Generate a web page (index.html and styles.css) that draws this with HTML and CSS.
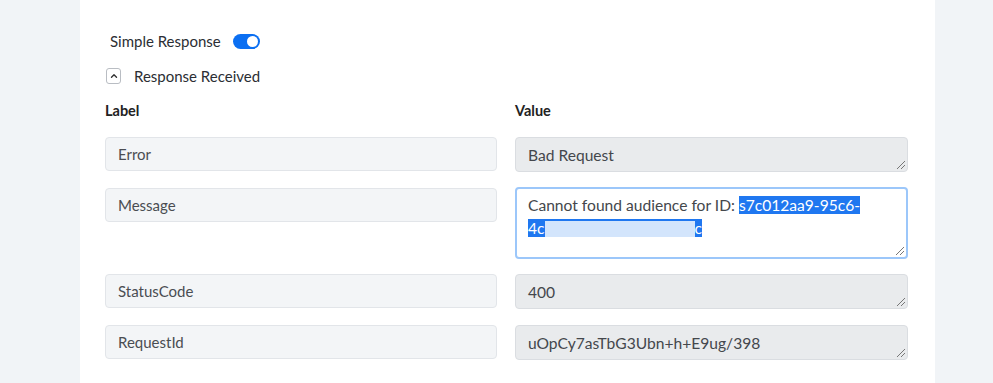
FILE: index.html
```html
<!DOCTYPE html>
<html lang="en">
<head>
  <meta charset="UTF-8">
  <meta name="viewport" content="width=device-width, initial-scale=1">
  <title>Response Received</title>
  <link rel="stylesheet" href="styles.css">
</head>
<body>
  <div class="card">
    <div class="toggle-row">
      <span>Simple Response</span>
      <span class="switch"><span class="knob"></span></span>
    </div>

    <div class="section-row">
      <span class="collapse-btn">
        <!-- chevron up -->
        <svg viewBox="0 0 10 10"><path d="M2.5 6.2 5 3.7 7.5 6.2" fill="none" stroke="#333" stroke-width="1.4" stroke-linecap="round" stroke-linejoin="round"/></svg>
      </span>
      <span>Response Received</span>
    </div>

    <div class="grid">
      <div class="head">Label</div>
      <div class="head">Value</div>

      <div class="field">Error</div>
      <div class="area">Bad Request<span class="grip"></span></div>

      <div class="field">Message</div>
      <div class="area focused">Cannot found audience for ID: <span class="sel">s7c012aa9-95c6-</span><br><span class="sel">4c<span class="blur"></span>c</span><span class="grip"></span></div>

      <div class="field">StatusCode</div>
      <div class="area">400<span class="grip"></span></div>

      <div class="field">RequestId</div>
      <div class="area">uOpCy7asTbG3Ubn+h+E9ug/398<span class="grip"></span></div>
    </div>
  </div>
</body>
</html>
```

FILE: styles.css
```css
body {
  margin: 0;
  padding: 0;
  background: #f1f4f7;
  font-family: Lato, "Open Sans", sans-serif;
  color: #3c3f44;
  height: 383px;
  overflow: hidden;
}
.card {
  margin-left: 80px;
  width: 855px;
  height: 383px;
  background: #fff;
  box-sizing: border-box;
  padding: 31px 27px 0 25px;
}
.toggle-row {
  display: flex;
  align-items: center;
  gap: 12px;
  padding-left: 5px;
  font-size: 15px;
  height: 20px;
  color: #2b2e33;
}
.switch {
  width: 27px;
  height: 15px;
  border-radius: 8px;
  background: #0b6ff2;
  position: relative;
}
.knob {
  position: absolute;
  right: 2px;
  top: 2px;
  width: 11px;
  height: 11px;
  border-radius: 50%;
  background: #fff;
}
.section-row {
  display: flex;
  align-items: center;
  gap: 13px;
  margin-top: 15px;
  padding-left: 1px;
  font-size: 15px;
  height: 20px;
  color: #2b2e33;
}
.collapse-btn {
  width: 13px;
  height: 14px;
  border: 1px solid #b9bdc3;
  border-radius: 3px;
  display: flex;
  align-items: center;
  justify-content: center;
}
.collapse-btn svg {
  width: 10px;
  height: 10px;
}
.grid {
  display: grid;
  grid-template-columns: 392px 393px;
  column-gap: 18px;
  row-gap: 16px;
  margin-top: 16px;
}
.head {
  font-weight: bold;
  font-size: 14.5px;
  color: #222;
  height: 20px;
  margin-bottom: -1px;
}
.field {
  height: 34px;
  box-sizing: border-box;
  border: 1px solid #e2e5e9;
  border-radius: 4px;
  background: #f3f5f7;
  padding: 0 12px;
  display: flex;
  align-items: center;
  font-size: 15px;
  color: #4a4d52;
}
.area {
  position: relative;
  height: 35px;
  box-sizing: border-box;
  border: 1px solid #dadde1;
  border-radius: 4px;
  background: #e9ebed;
  padding: 8px 12px;
  font-size: 15.6px;
  line-height: 19px;
  color: #44474c;
}
.area.focused {
  background: #fff;
  height: 72px;
  border: 2px solid #9cc7fa;
  padding: 5px 11px;
  line-height: 23px;
  margin-top: -1px;
  margin-bottom: -1px;
}
.sel {
  background: #1f77f0;
  color: #fff;
}
.blur {
  display: inline-block;
  width: 150px;
  height: 16px;
  vertical-align: -3px;
  background: #d3e5fc;
}
.grip {
  position: absolute;
  right: 2px;
  bottom: 2px;
  width: 8px;
  height: 8px;
  background: linear-gradient(135deg, transparent 45%, #777 45%, #777 55%, transparent 55%, transparent 70%, #777 70%, #777 80%, transparent 80%);
}
```
